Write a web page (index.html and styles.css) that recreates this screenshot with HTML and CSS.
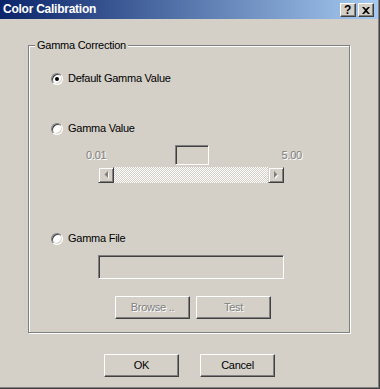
FILE: index.html
```html
<!DOCTYPE html>
<html lang="en">
<head>
    <meta charset="UTF-8">
    <title>Color Calibration</title>
    <link rel="stylesheet" href="styles.css">
</head>
<body>
    <div class="window">
        <!-- Caption -->
        <div class="titlebar">
            <span class="title">Color Calibration</span>
            <div class="caption-buttons">
                <span class="cap-btn help">?</span>
                <span class="cap-btn close">
                    <svg width="8" height="7" viewBox="0 0 8 7">
                        <path d="M0 0h2l2 2 2-2h2L5 3.5 8 7H6L4 5 2 7H0l3-3.5z" fill="#000"/>
                    </svg>
                </span>
            </div>
        </div>

        <!-- Gamma group -->
        <div class="group">
            <span class="group-title">Gamma Correction</span>

            <div class="radio-row first">
                <span class="radio checked"></span>
                <span class="radio-label">Default Gamma Value</span>
            </div>

            <div class="radio-row second">
                <span class="radio"></span>
                <span class="radio-label">Gamma Value</span>
            </div>

            <div class="slider">
                <div class="slider-values">
                    <span class="disabled-text">0.01</span>
                    <span class="edit small"></span>
                    <span class="disabled-text max">5.00</span>
                </div>
                <div class="scrollbar">
                    <span class="scroll-btn">
                        <svg width="5" height="8" viewBox="0 0 5 8">
                            <polygon points="5,1 5,8 1.5,4.5" fill="#fff"/>
                            <polygon points="4,0 4,7 0.5,3.5" fill="#808080"/>
                        </svg>
                    </span>
                    <span class="track"></span>
                    <span class="scroll-btn">
                        <svg width="5" height="8" viewBox="0 0 5 8">
                            <polygon points="1,1 1,8 4.5,4.5" fill="#fff"/>
                            <polygon points="0,0 0,7 3.5,3.5" fill="#808080"/>
                        </svg>
                    </span>
                </div>
            </div>

            <div class="radio-row third">
                <span class="radio"></span>
                <span class="radio-label">Gamma File</span>
            </div>

            <div class="edit file"></div>

            <div class="group-buttons">
                <span class="button disabled">Browse ..</span>
                <span class="button disabled">Test</span>
            </div>
        </div>

        <div class="footer">
            <span class="button">OK</span>
            <span class="button">Cancel</span>
        </div>
    </div>
</body>
</html>
```

FILE: styles.css
```css
body {
    margin: 0;
    font-family: "Liberation Sans", Arial, sans-serif;
    font-size: 11px;
    letter-spacing: -0.25px;
    color: #000;
}

.window {
    width: 380px;
    height: 389px;
    box-sizing: border-box;
    background: #d4d0c8;
    border-right: 1px solid #404040;
    border-bottom: 1px solid #404040;
    box-shadow: inset -1px -1px 0 #808080;
    display: flex;
    flex-direction: column;
}

/* Caption bar */
.titlebar {
    height: 19px;
    margin-right: 1px;
    padding: 0 4px 0 3px;
    background: linear-gradient(to right, #0a246a, #a6caf0);
    display: flex;
    align-items: flex-start;
    justify-content: space-between;
}

.title {
    color: #fff;
    font-weight: bold;
    font-size: 12px;
    letter-spacing: -0.25px;
    line-height: 19px;
}

.caption-buttons {
    display: flex;
    gap: 2px;
    margin-top: 3px;
}

.cap-btn {
    width: 16px;
    height: 14px;
    box-sizing: border-box;
    background: #d4d0c8;
    border: 1px solid;
    border-color: #fff #404040 #404040 #fff;
    box-shadow: inset -1px -1px 0 #808080;
    display: flex;
    align-items: center;
    justify-content: center;
}

.cap-btn.help {
    font-weight: bold;
    font-size: 12px;
    line-height: 12px;
    padding-right: 1px;
}

.cap-btn.close svg {
    margin-right: 1px;
}

/* Group box */
.group {
    position: relative;
    width: 322px;
    height: 288px;
    box-sizing: border-box;
    margin: 26px 0 0 28px;
    padding: 26px 0 0 22px;
    border: 1px solid #808080;
    box-shadow: 1px 1px 0 #fff, inset 1px 1px 0 #fff;
}

.group-title {
    position: absolute;
    top: -7px;
    left: 6px;
    padding: 0 2px;
    line-height: 13px;
    background: #d4d0c8;
}

.radio-row {
    display: flex;
    align-items: center;
    gap: 5px;
    height: 13px;
}

.radio-row.second {
    margin-top: 37px;
}

.radio-row.third {
    margin-top: 49px;
}

.radio {
    position: relative;
    width: 12px;
    height: 12px;
    box-sizing: border-box;
    border-radius: 50%;
    background: #fff;
    border: 1px solid;
    border-color: #808080 #fff #fff #808080;
    box-shadow: inset 1px 1px 0 #404040, inset -1px -1px 0 #d4d0c8;
}

.radio.checked::after {
    content: "";
    position: absolute;
    left: 3px;
    top: 3px;
    width: 4px;
    height: 4px;
    border-radius: 50%;
    background: #000;
}

.radio-label {
    line-height: 13px;
}

/* Slider section */
.slider {
    margin: 10px 0 0 35px;
    width: 216px;
}

.slider-values {
    display: grid;
    grid-template-columns: 89px 34px 1fr;
    align-items: center;
    height: 20px;
}

.disabled-text {
    color: #808080;
    text-shadow: 1px 1px 0 #fff;
    line-height: 13px;
}

.disabled-text.max {
    text-align: right;
}

.edit {
    display: block;
    box-sizing: border-box;
    background: #d4d0c8;
    border: 1px solid;
    border-color: #808080 #fff #fff #808080;
    box-shadow: inset 1px 1px 0 #404040, inset -1px -1px 0 #d4d0c8;
}

.edit.small {
    width: 34px;
    height: 20px;
}

.scrollbar {
    display: flex;
    width: 186px;
    height: 16px;
    margin: 2px 0 0 12px;
}

.scroll-btn {
    width: 16px;
    height: 16px;
    box-sizing: border-box;
    background: #d4d0c8;
    border: 1px solid;
    border-color: #d4d0c8 #404040 #404040 #d4d0c8;
    box-shadow: inset 1px 1px 0 #fff, inset -1px -1px 0 #808080;
    display: flex;
    align-items: center;
    justify-content: center;
}

.track {
    flex: 1;
    background: repeating-conic-gradient(#fff 0 25%, #d4d0c8 0 50%) 0 0 / 2px 2px;
}

.edit.file {
    width: 186px;
    height: 24px;
    margin: 10px 0 0 47px;
}

.group-buttons {
    display: flex;
    gap: 6px;
    margin: 17px 0 0 64px;
}

/* Push buttons */
.button {
    width: 75px;
    height: 23px;
    box-sizing: border-box;
    border: 1px solid;
    border-color: #fff #404040 #404040 #fff;
    box-shadow: inset -1px -1px 0 #808080;
    text-align: center;
    line-height: 21px;
}

.button.disabled {
    color: #808080;
    text-shadow: 1px 1px 0 #fff;
}

.footer {
    display: flex;
    gap: 21px;
    margin: 21px 0 0 104px;
}
```
